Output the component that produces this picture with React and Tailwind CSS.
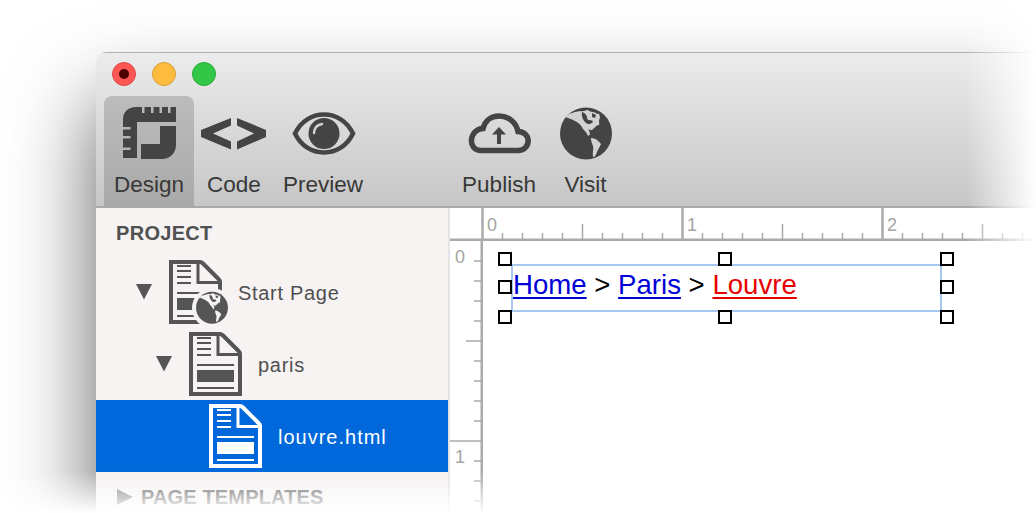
import React from 'react';

const sans = "font-['Liberation_Sans',Arial,sans-serif]";

// light shapes cut out of the globe disc, drawn in a 62x62 box
const Globe = ({ size = 62, dark = '#444444', light = '#d2d2d2' }) => (
  <svg width={size} height={size} viewBox="0 0 62 62" className="block shrink-0">
    <circle cx="31" cy="30.5" r="26" fill={dark} />
    <path
      d="M10 14 C14 10 20 9 25 8 C29 9 30 7 33 7 C36 10 39 8 42 11 C44 9 45 13 45 15 C43 18 45 20 44 22 C41 22 40 25 38 26 C37 28 35 27 33 26 C35 29 36 32 33 33 C32 30 30 28 28 26 C26 22 24 20 20 18 C17 16 13 15 10 14 Z"
      fill={light}
    />
    <path
      d="M36 35 C40 35 43 37 46 41 C45 44 43 46 42 49 C41 52 40 54 38 54 C37 50 39 46 38 43 C37 41 36 38 36 35 Z"
      fill={light}
    />
    <path d="M27 9 C30 10 33 13 32 16 C34 18 37 16 38 19 C36 21 33 22 31 20 C29 18 26 14 27 9 Z" fill={dark} />
    <path d="M37 10 L41 12 L40 15 L37 14 Z" fill={dark} />
  </svg>
);

const Doc = ({ color = '#555555', badge }) => (
  <div className="relative w-[53px] h-[64px] shrink-0">
    <svg width="53" height="64" viewBox="0 0 53 64" fill="none" className="block">
      <path d="M2 2 H31 C32 2 33 2.5 34 3.5 L49.5 19 C50.5 20 51 21 51 22 V62 H2 Z" stroke={color} strokeWidth="4" />
      <path d="M29 3 V22.5 H51" stroke={color} strokeWidth="3" />
      <g fill={color}>
        <rect x="8" y="5" width="14" height="2" />
        <rect x="8" y="10" width="14" height="2" />
        <rect x="8" y="16" width="14" height="2" />
        <rect x="8" y="22" width="14" height="2" />
        <rect x="8" y="32" width="37" height="2" />
        <rect x="8" y="38" width="37" height="12" />
        <rect x="8" y="55" width="37" height="2" />
      </g>
    </svg>
    {badge && (
      <div className="absolute left-[23px] top-[28px] rounded-full bg-[#f6f3f2] p-[1px]">
        <Globe size={38} dark="#555555" light="#f6f3f2" />
      </div>
    )}
  </div>
);

const Tri = ({ right, color = '#555555' }) => (
  <svg width="16" height="16" viewBox="0 0 16 16" className="block shrink-0">
    <polygon points={right ? '0,0 16,8 0,16' : '0,0 16,0 8,15.5'} fill={color} />
  </svg>
);

const DesignIcon = () => (
  <svg width="70" height="70" viewBox="0 0 70 70" fill="#444444" className="block">
    <path d="M9 59 V21 C9 13 14 8 22 8 H28 V14 H30.5 V8 H37 V14 H39.5 V8 H45.5 V14 H48 V8 H54 V14 H56.5 V8 H62 V23 H23 V59 H9 V51 H16.5 V48.5 H9 V39.5 H16.5 V37 H9 V30.5 H16.5 V28 H9 Z" />
    <path d="M46 27 H62 V46 C62 54 56 60 48 60 H27 V45 H46 Z" />
  </svg>
);

const CodeIcon = () => (
  <svg width="66" height="34" viewBox="0 0 66 34" fill="#444444" className="block">
    <polygon points="0,13 30,1 30,8.5 12,16.5 30,24.5 30,32.5 0,20" />
    <polygon points="36,1 65,13 65,20 36,32.5 36,24.5 53,16.5 36,8.5" />
  </svg>
);

const EyeIcon = () => (
  <svg width="66" height="44" viewBox="0 0 66 44" fill="none" className="block">
    <path d="M5 21.5 C11 9 22 2.5 34 2.5 C46 2.5 57 9 63 21.5 C57 34 46 40.5 34 40.5 C22 40.5 11 34 5 21.5 Z" stroke="#444444" strokeWidth="4.5" />
    <circle cx="34" cy="21.5" r="15.5" fill="#444444" />
    <path d="M24 21 C24 16 27 13 32 12" stroke="#d0d0d0" strokeWidth="2.5" strokeLinecap="round" />
  </svg>
);

const CloudIcon = () => (
  <svg width="66" height="42" viewBox="0 0 66 42" fill="none" className="block">
    <path d="M15 37.5 H52 C65 37.5 66 19 52 18.5 C50 9 42 3 33 3 C25 3 19 8 17 15.5 C3 16 1 37.5 15 37.5 Z" stroke="#444444" strokeWidth="5.5" />
    <path d="M33 31 V18" stroke="#444444" strokeWidth="4" />
    <polygon points="26,21.5 33,14 40,21.5" fill="#444444" />
  </svg>
);

const ToolButton = ({ label, width, active, children }) => (
  <div
    className={`flex flex-col items-center h-[110px] ${width} ${
      active ? 'bg-gradient-to-b from-[#bcbcbc] to-[#a9a9a9] rounded-t-lg' : ''
    }`}
  >
    <div className="h-[76px] flex items-center justify-center">{children}</div>
    <span className="text-[22.5px] leading-[26px] text-[#383838]">{label}</span>
  </div>
);

const TreeRow = ({ indent, open, label, badge, selected }) => (
  <div className={`h-[72px] flex items-center ${indent} ${selected ? 'bg-[#0068da]' : ''}`}>
    {open && <Tri />}
    <div className={open ? 'ml-[17px]' : ''}>
      <Doc color={selected ? '#ffffff' : '#555555'} badge={badge} />
    </div>
    <span className={`ml-4 pt-[1px] text-[20px] ${selected ? 'tracking-[1px] text-white' : 'tracking-[0.7px] text-[#4f4f4f]'}`}>{label}</span>
  </div>
);

const Handle = ({ pos }) => (
  <div className={`absolute w-[14px] h-[14px] bg-white border-2 border-black ${pos}`} />
);

const topMinor = Array.from({ length: 28 }, (_, i) => 32.5 + i * 20);
const leftMinor = Array.from({ length: 14 }, (_, i) => 20 + i * 20);

const TopRuler = () => (
  <svg width="586" height="33" viewBox="0 0 586 33" className="block shrink-0">
    {topMinor.map((x, i) => {
      const major = i % 10 === 0;
      const mid = i % 5 === 0;
      return (
        <line key={x} x1={x} x2={x} y1={major ? 0 : mid ? 16 : 25} y2="32" stroke="#aaaaaa" strokeWidth={major ? 2.5 : 1.5} />
      );
    })}
    <rect x="0" y="30.5" width="586" height="2.5" fill="#aaaaaa" />
    <g fill="#a4a4a4" fontSize="18" fontFamily="Liberation Sans, Arial, sans-serif">
      <text x="37" y="23">0</text>
      <text x="237" y="23">1</text>
      <text x="437" y="23">2</text>
    </g>
  </svg>
);

const LeftRuler = () => (
  <svg width="33" height="272" viewBox="0 0 33 272" className="block shrink-0">
    {leftMinor.map((y, i) => {
      const n = i + 1;
      const major = n % 10 === 0;
      const mid = n % 5 === 0;
      return (
        <line key={y} x1={major ? 0 : mid ? 16 : 24} x2="32" y1={y} y2={y} stroke="#aaaaaa" strokeWidth="1.5" />
      );
    })}
    <rect x="30.5" y="0" width="2.5" height="272" fill="#aaaaaa" />
    <g fill="#a4a4a4" fontSize="18" fontFamily="Liberation Sans, Arial, sans-serif">
      <text x="5" y="22">0</text>
      <text x="5" y="222">1</text>
    </g>
  </svg>
);

const App = () => {
  return (
    <div className={`relative w-[1036px] h-[513px] overflow-hidden bg-white pl-[96px] pt-[52px] ${sans}`}>
      {/* Window */}
      <div className="w-[1100px] h-[600px] rounded-tl-[10px] bg-white shadow-[0_50px_85px_rgba(0,0,0,0.62)] overflow-hidden">
        {/* Toolbar */}
        <div className="h-[156px] bg-gradient-to-b from-[#ececec] to-[#c6c6c6] border-t border-[#b0b0b0] border-b-2 border-b-[#a8a8a8]">
          <div className="h-[43px] flex items-center gap-4 pl-4 pb-[2px]">
            <div className="w-6 h-6 rounded-full bg-[#fc5753] border border-[#df4744] flex items-center justify-center">
              <div className="w-[10px] h-[10px] rounded-full bg-[#4d0000]" />
            </div>
            <div className="w-6 h-6 rounded-full bg-[#fdbc40] border border-[#de9f34]" />
            <div className="w-6 h-6 rounded-full bg-[#33c748] border border-[#27aa35]" />
          </div>
          <div className="flex pl-2">
            <ToolButton label="Design" width="w-[90px]" active><DesignIcon /></ToolButton>
            <ToolButton label="Code" width="w-[80px]"><CodeIcon /></ToolButton>
            <ToolButton label="Preview" width="w-[98px]"><EyeIcon /></ToolButton>
            <div className="w-[82px]" />
            <ToolButton label="Publish" width="w-[90px]"><CloudIcon /></ToolButton>
            <ToolButton label="Visit" width="w-[83px]"><Globe /></ToolButton>
          </div>
        </div>

        <div className="flex">
          {/* Sidebar */}
          <div className="w-[354px] shrink-0 h-[444px] bg-[#f6f3f2] border-r-2 border-[#e4e4e4]">
            <div className="h-[48px] flex items-center pl-5 pt-[2px] text-[20px] font-bold tracking-[0.3px] text-[#505050]">PROJECT</div>
            <TreeRow indent="pl-10" open label="Start Page" badge />
            <TreeRow indent="pl-[60px]" open label="paris" />
            <TreeRow indent="pl-[113px]" label="louvre.html" selected />
            <div className="h-[50px] flex items-center pl-[21px] gap-2 text-[20px] font-bold tracking-[0.15px] text-[#555555]">
              <Tri right color="#777777" />
              <span>PAGE TEMPLATES</span>
            </div>
          </div>

          {/* Canvas */}
          <div className="flex flex-col">
            <TopRuler />
            <div className="flex">
              <LeftRuler />
              <div className="pl-[28px] pt-[23px]">
                <div className="relative w-[431px] h-[48px] border-2 border-[#a6c8f0] text-[27.6px] leading-[38px] text-black whitespace-nowrap">
                  <a className="text-[#0000d8] underline decoration-2 underline-offset-[3px]">Home</a>
                  <span> &gt; </span>
                  <a className="text-[#0000d8] underline decoration-2 underline-offset-[3px]">Paris</a>
                  <span> &gt; </span>
                  <a className="text-[#e60000] underline decoration-2 underline-offset-[3px]">Louvre</a>
                  <Handle pos="left-[-15px] top-[-14px]" />
                  <Handle pos="left-[205px] top-[-14px]" />
                  <Handle pos="left-[427px] top-[-14px]" />
                  <Handle pos="left-[-15px] top-[14px]" />
                  <Handle pos="left-[427px] top-[14px]" />
                  <Handle pos="left-[-15px] top-[44px]" />
                  <Handle pos="left-[205px] top-[44px]" />
                  <Handle pos="left-[427px] top-[44px]" />
                </div>
              </div>
            </div>
          </div>
        </div>
      </div>

      {/* Screenshot fades out at the bottom and right */}
      <div className="absolute left-0 right-0 bottom-0 h-[42px] bg-gradient-to-b from-[rgba(255,255,255,0)] to-white" />
      <div className="absolute top-0 bottom-0 right-0 w-[70px] bg-gradient-to-r from-[rgba(255,255,255,0)] to-white" />
    </div>
  );
};

export default App;
